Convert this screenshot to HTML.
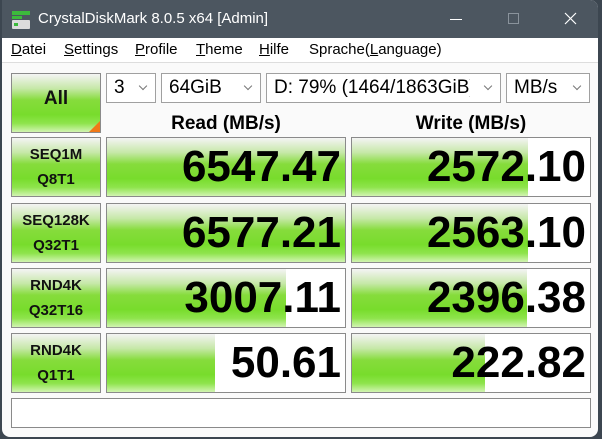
<!DOCTYPE html>
<html><head><meta charset="utf-8"><style>
*{margin:0;padding:0;box-sizing:border-box}
body{width:602px;height:439px;background:#3c4650;font-family:"Liberation Sans",sans-serif;position:relative;overflow:hidden}
.win{position:absolute;left:2px;top:0;width:596px;height:437px;background:#fafafa;border-radius:0 8px 8px 8px;overflow:hidden}
.title{position:absolute;left:0;top:0;width:100%;height:38px;background:#4c5660;color:#fff;font-size:15px}
.menu{position:absolute;left:0;top:38px;width:100%;height:25px;background:#fff;border-bottom:1px solid #ddd;font-size:15px;color:#000}
.menu span{position:absolute;top:3px}
.abs{position:absolute}
.g{background:linear-gradient(#f4f4f4 0%,#c6e8a8 25%,#86dc3c 45%,#78dc2c 70%,#8ee44c 85%,#d2f4b2 100%)}
.lbl{position:absolute;left:9px;width:90px;height:60px;border:1px solid #8a8a8a;font-weight:bold;font-size:15px;text-align:center;line-height:25px;padding-top:4px;color:#111}
.box{position:absolute;height:60px;border:1px solid #8a8a8a;background:#fff;overflow:hidden}
.bar{position:absolute;left:0;top:0;bottom:0}
.num{position:absolute;right:4px;top:4px;font-weight:bold;font-size:44px;line-height:50px;color:#000}
.cb{position:absolute;top:73px;height:30px;border:1px solid #a0a0a0;background:#fff;font-size:19px;padding-left:7px;line-height:28px}
.cb i{position:absolute;right:9px;top:9px;width:6px;height:6px;border-right:1px solid #777;border-bottom:1px solid #777;transform:rotate(45deg)}
.hd{position:absolute;top:113px;font-weight:bold;font-size:19px;text-align:center;width:240px}
</style></head><body>
<div class="win">
<div class="title">
<svg class="abs" style="left:9px;top:10px" width="20" height="20"><rect x="1" y="1" width="18" height="4" fill="#3cba3c"/><rect x="1" y="6" width="10" height="3" fill="#3cba3c"/><rect x="1" y="10" width="18" height="9" rx="1" fill="#dcdcdc"/><rect x="3" y="13" width="4" height="3" fill="#3cba3c"/></svg>
<span class="abs" style="left:36px;top:10px">CrystalDiskMark 8.0.5 x64 [Admin]</span>
<div class="abs" style="left:448px;top:19px;width:12px;height:1px;background:#fff"></div>
<div class="abs" style="left:506px;top:13px;width:11px;height:11px;border:1px solid #8a939c"></div>
<svg class="abs" style="left:562px;top:12px" width="13" height="13"><path d="M1 1L12 12M12 1L1 12" stroke="#fff" stroke-width="1.2"/></svg>
</div>
<div class="menu">
<span style="left:9px"><u>D</u>atei</span><span style="left:62px"><u>S</u>ettings</span><span style="left:133px"><u>P</u>rofile</span><span style="left:194px"><u>T</u>heme</span><span style="left:257px"><u>H</u>ilfe</span><span style="left:307px">Sprache(<u>L</u>anguage)</span>
</div>
<div class="lbl g" style="top:73px;line-height:50px;padding-top:0;font-size:19px">All<div class="abs" style="right:0;bottom:0;width:0;height:0;border-left:11px solid transparent;border-bottom:11px solid #f07818"></div></div>
<div class="cb" style="left:104px;width:50px">3<i></i></div>
<div class="cb" style="left:159px;width:100px">64GiB<i></i></div>
<div class="cb" style="left:264px;width:235px;white-space:nowrap"><div style="width:196px;overflow:hidden">D: 79% (1464/1863GiB)</div><i></i></div>
<div class="cb" style="left:504px;width:84px">MB/s<i></i></div>
<div class="hd" style="left:104px">Read (MB/s)</div>
<div class="hd" style="left:349px">Write (MB/s)</div>

<div class="lbl g" style="top:137px">SEQ1M<br>Q8T1</div>
<div class="box" style="left:104px;top:137px;width:240px"><div class="bar g" style="width:240px"></div><div class="num">6547.47</div></div>
<div class="box" style="left:349px;top:137px;width:240px"><div class="bar g" style="width:176px"></div><div class="num">2572.10</div></div>

<div class="lbl g" style="top:203px">SEQ128K<br>Q32T1</div>
<div class="box" style="left:104px;top:203px;width:240px"><div class="bar g" style="width:240px"></div><div class="num">6577.21</div></div>
<div class="box" style="left:349px;top:203px;width:240px"><div class="bar g" style="width:176px"></div><div class="num">2563.10</div></div>

<div class="lbl g" style="top:268px">RND4K<br>Q32T16</div>
<div class="box" style="left:104px;top:268px;width:240px"><div class="bar g" style="width:179px"></div><div class="num">3007.11</div></div>
<div class="box" style="left:349px;top:268px;width:240px"><div class="bar g" style="width:175px"></div><div class="num">2396.38</div></div>

<div class="lbl g" style="top:333px">RND4K<br>Q1T1</div>
<div class="box" style="left:104px;top:333px;width:240px"><div class="bar g" style="width:108px"></div><div class="num">50.61</div></div>
<div class="box" style="left:349px;top:333px;width:240px"><div class="bar g" style="width:133px"></div><div class="num">222.82</div></div>

<div class="box" style="left:9px;top:398px;width:580px;height:30px"></div>
</div>
</body></html>
